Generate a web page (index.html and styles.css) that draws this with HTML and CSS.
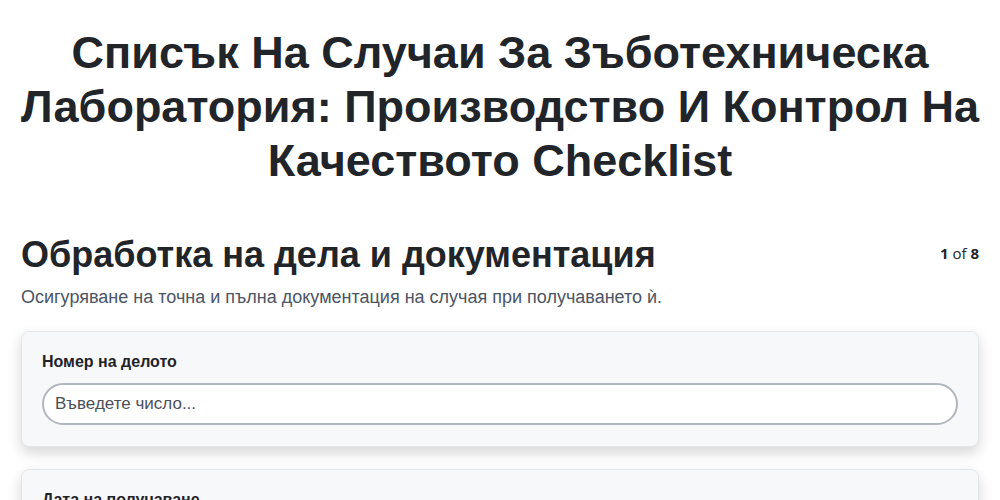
FILE: index.html
```html
<!DOCTYPE html>
<html lang="bg">
<head>
<meta charset="utf-8">
<title>Checklist</title>
<link rel="stylesheet" href="styles.css">
</head>
<body>
<main class="page">
  <h1 class="title">Списък На Случаи За Зъботехническа Лаборатория: Производство И Контрол На Качеството Checklist</h1>
  <section class="section">
    <div class="section-head">
      <h2 class="section-title">Обработка на дела и документация</h2>
      <div class="counter"><b>1</b> of <b>8</b></div>
    </div>
    <p class="section-desc">Осигуряване на точна и пълна документация на случая при получаването ѝ.</p>
    <div class="cards">
      <div class="card">
        <label class="field-label" for="f1">Номер на делото</label>
        <input class="field-input" id="f1" type="text" placeholder="Въведете число...">
      </div>
      <div class="card">
        <label class="field-label" for="f2">Дата на получаване</label>
        <input class="field-input" id="f2" type="text" placeholder="Изберете дата...">
      </div>
    </div>
  </section>
</main>
</body>
</html>
```

FILE: styles.css
```css
* { box-sizing: border-box; }
html, body { margin: 0; padding: 0; background: #ffffff; }
body {
  font-family: "Liberation Sans", Arial, sans-serif;
  color: #212529;
}
.page {
  padding: 26px 21px 40px 21px;
}
.title {
  font-family: "Liberation Sans", Arial, sans-serif;
  font-size: 45px;
  line-height: 54px;
  font-weight: 700;
  text-align: center;
  margin: 0 -12px 45px -12px;
  color: #212529;
}
.section-head {
  display: flex;
  justify-content: space-between;
  align-items: flex-start;
}
.section-title {
  font-size: 36px;
  line-height: 43px;
  font-weight: 700;
  margin: 0;
  color: #212529;
}
.counter {
  font-family: "Open Sans", "Liberation Sans", sans-serif;
  font-size: 15px;
  line-height: 20px;
  padding-top: 10px;
  color: #212529;
}
.section-desc {
  margin: 8px 0 0 0;
  font-size: 18px;
  line-height: 27px;
  color: #4b5563;
}
.cards {
  display: flex;
  flex-direction: column;
  gap: 22px;
  margin-top: 20px;
}
.card {
  background: #f7f8fa;
  border: 1px solid #e4e6ea;
  border-radius: 8px;
  padding: 20px 20px 21px 20px;
  box-shadow: 0 6px 14px rgba(0, 0, 0, 0.16);
  display: flex;
  flex-direction: column;
}
.field-label {
  font-size: 16px;
  line-height: 20px;
  font-weight: 700;
  color: #1f2328;
  margin-bottom: 11px;
}
.field-input {
  height: 42px;
  border: 2px solid #b1b6bc;
  border-radius: 21px;
  background: #ffffff;
  padding: 0 11px;
  font-family: "Liberation Sans", Arial, sans-serif;
  font-size: 17px;
  color: #212529;
  outline: none;
}
.field-input::placeholder { color: #4a4f57; opacity: 1; }
```
